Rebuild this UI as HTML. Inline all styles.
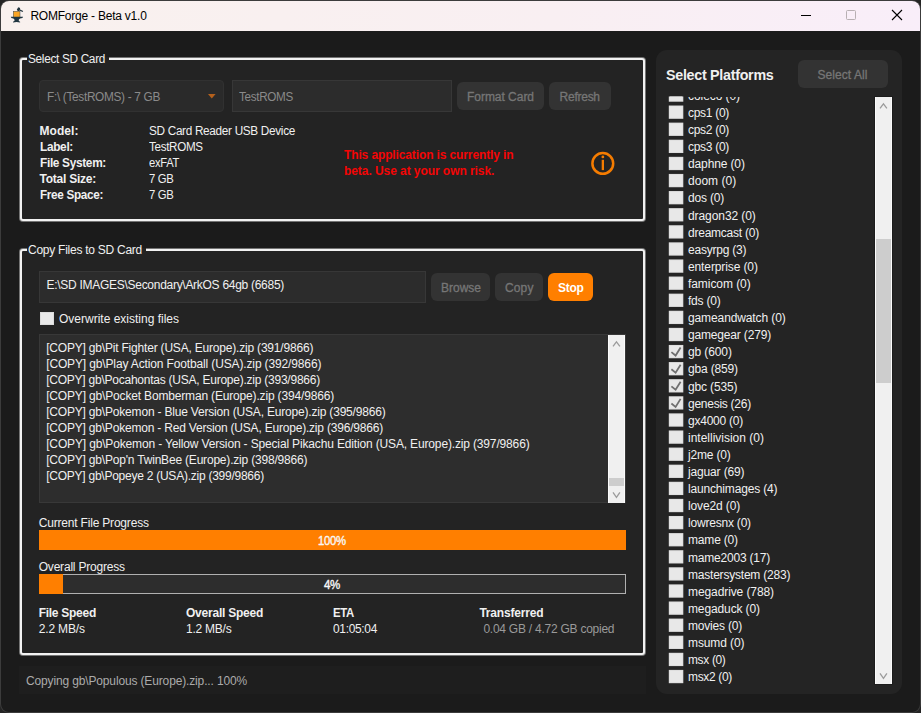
<!DOCTYPE html><html><head><meta charset="utf-8"><title>ROMForge - Beta v1.0</title><style>
html,body{margin:0;padding:0;background:#242424;}
body{width:921px;height:713px;overflow:hidden;position:relative;font-family:"Liberation Sans", sans-serif;font-size:12px;color:#fff;}
#win{position:absolute;left:1px;top:1px;width:919px;height:711px;border-radius:8px;background:#1b1b1b;overflow:hidden;box-shadow:0 0 0 1px #3c3c3c;}
#tb{position:absolute;left:0;top:0;width:919px;height:30px;background:linear-gradient(90deg,#f9f1ee 0%,#f9eff2 60%,#f9eef9 100%);}
.tx{position:absolute;transform-origin:0 50%;white-space:pre;line-height:16px;height:16px;margin-top:-8px;color:#f0f0f0;}
.title{color:#000;}
.b{font-weight:bold;}
.dis{color:#8a8a8a;}
.btn{color:#767676;-webkit-text-stroke:0.3px #767676;}
.stop{color:#fff;font-weight:bold;}
.red{color:#f40505;font-weight:bold;}
.gray{color:#9a9a9a;}
.status{color:#ababab;}
.hd{font-weight:bold;font-size:14.3px;}
.lg{color:#f0f0f0;}
.box{position:absolute;box-sizing:border-box;}
.grp{border:2px solid #f2f2f2;border-radius:3px;background:#232323;box-shadow:0 0 0 1px rgba(240,240,240,0.42);}
.legbg{background:#232323;}
.button{background:#333;border-radius:6px;}
.field{background:#2c2c2c;border:1px solid #373737;}
.cb{position:absolute;box-sizing:border-box;width:14px;height:13px;background:#e9e9e9;border:1px solid #dcdcdc;}
.sb{background:#f0f0f0;border:1px solid #fbfbfb;border-top:none;border-bottom:none}
.thumb{background:#cdcdcd;}
</style></head><body><div id="win"><div id="tb"></div></div>
<div class="box grp" style="left:20px;top:58px;width:625px;height:163px"></div>
<div class="box legbg" style="left:26.5px;top:50px;width:82.5px;height:16px;background:linear-gradient(#1b1b1b 0,#1b1b1b 7px,#232323 7px)"></div>
<div class="box" style="left:39px;top:80px;width:185px;height:32px;background:#2a2a2a;border:1px solid #313131;border-radius:4px"></div>
<svg class="box" style="left:207px;top:93px" width="10" height="7" viewBox="0 0 10 7"><path d="M1 1H8.6L4.8 5.6Z" fill="#b4601c"/></svg>
<div class="box field" style="left:232px;top:80px;width:219.5px;height:32px"></div>
<div class="box button" style="left:457px;top:82px;width:87px;height:28px"></div>
<div class="box button" style="left:549px;top:82px;width:61.5px;height:28px"></div>
<svg class="box" style="left:590px;top:151px" width="26" height="26" viewBox="0 0 26 26"><circle cx="12.8" cy="12.4" r="10.4" fill="none" stroke="#f57c00" stroke-width="2.5"/><rect x="11.7" y="8.8" width="2.3" height="10.3" fill="#f57c00"/><circle cx="12.85" cy="5.9" r="1.4" fill="#f57c00"/></svg>
<div class="box grp" style="left:20px;top:249px;width:625px;height:406px"></div>
<div class="box legbg" style="left:26.5px;top:241px;width:119.5px;height:16px;background:linear-gradient(#1b1b1b 0,#1b1b1b 7px,#232323 7px)"></div>
<div class="box field" style="left:39px;top:271px;width:387px;height:32px"></div>
<div class="box button" style="left:431px;top:273px;width:59px;height:28px"></div>
<div class="box button" style="left:495px;top:273px;width:48px;height:28px"></div>
<div class="box button" style="left:548px;top:273px;width:45px;height:28px;background:#ff7f00"></div>
<div class="cb" style="left:40px;top:312px;height:13px"></div>
<div class="box" style="left:39px;top:334px;width:586.5px;height:169px;background:#2d2d2d;border:1px solid #383838"></div>
<div class="box sb" style="left:608px;top:335px;width:17px;height:168px"></div>
<div class="box thumb" style="left:609px;top:478px;width:15px;height:7.7px"></div>
<svg class="box" style="left:608px;top:335px" width="17" height="17" viewBox="0 0 17 17"><path d="M5 11.4L8.45 6.9L11.9 11.4" fill="none" stroke="#9c9c9c" stroke-width="1.3"/></svg>
<svg class="box" style="left:608px;top:486px" width="17" height="17" viewBox="0 0 17 17"><path d="M5 6.4L8.45 11.4L11.9 6.4" fill="none" stroke="#9c9c9c" stroke-width="1.3"/></svg>
<div class="box" style="left:39px;top:530px;width:587px;height:19.5px;background:#ff7f00"></div>
<div class="box" style="left:39px;top:574px;width:587px;height:20px;background:#2d2d2d;border:1px solid #b0b0b0"></div>
<div class="box" style="left:39px;top:574px;width:24px;height:20px;background:#ff7f00"></div>
<div class="box" style="left:19px;top:666px;width:627px;height:27.5px;background:#1e1e1e"></div>
<div class="box" style="left:656px;top:49.5px;width:246px;height:644.5px;background:#242424;border-radius:11px"></div>
<div class="box button" style="left:798px;top:60px;width:90px;height:28px;border-radius:6px"></div>
<div class="box sb" style="left:875px;top:96.5px;width:17px;height:587.5px;box-shadow:0 0 0 1px #1c1c1c"></div>
<div class="box thumb" style="left:876px;top:239px;width:15px;height:144px"></div>
<svg class="box" style="left:875px;top:96.5px" width="17" height="17" viewBox="0 0 17 17"><path d="M5 11.4L8.45 6.9L11.9 11.4" fill="none" stroke="#9c9c9c" stroke-width="1.3"/></svg>
<svg class="box" style="left:875px;top:667px" width="17" height="17" viewBox="0 0 17 17"><path d="M5 6.4L8.45 11.4L11.9 6.4" fill="none" stroke="#9c9c9c" stroke-width="1.3"/></svg>
<svg class="box" style="left:795px;top:0" width="125" height="31" viewBox="0 0 125 31"><path d="M6 15.5H16" stroke="#000" stroke-width="1"/><rect x="51.5" y="10.5" width="9" height="9" rx="1" fill="none" stroke="#b8b0b3" stroke-width="1"/><path d="M97 10L107 20M107 10L97 20" stroke="#000" stroke-width="1.1"/></svg>
<svg class="box" style="left:4px;top:2px" width="30" height="28" viewBox="0 0 30 28"><rect x="9.3" y="9.3" width="6.7" height="6" fill="#f9a423" stroke="#3c4a50" stroke-width="0.5"/><path d="M6.8 14.7H19.1L18.4 15.9Q15.4 16.3 14.9 17.4L14.7 18.5Q15 19.3 16.1 19.7V20.6L12.6 19.9L9 20.6V19.7Q10.2 19.3 10.6 18.5L10.4 17.4Q9.9 16.3 7.4 15.9Z" fill="#1f3540"/><path d="M15 7.6L18.9 9.5" stroke="#22363f" stroke-width="1.2" fill="none"/><rect x="13.3" y="5.4" width="2.4" height="3.6" rx="0.8" transform="rotate(28 14.5 7.2)" fill="#22363f"/></svg>
<div class="box" style="left:660px;top:96px;width:215px;height:588px;overflow:hidden">
<svg class="box" style="left:0;top:0" width="215" height="588" viewBox="0 0 215 588"><defs><clipPath id="lc"><rect x="0" y="0.55" width="215" height="587.5"/></clipPath></defs><g clip-path="url(#lc)"><rect x="8.8" y="-7.58" width="14.5" height="13.3" fill="#dedede"/><rect x="9.8" y="-6.58" width="12.5" height="11.3" fill="#e8e8e8"/><rect x="8.8" y="9.52" width="14.5" height="13.3" fill="#dedede"/><rect x="9.8" y="10.52" width="12.5" height="11.3" fill="#e8e8e8"/><rect x="8.8" y="26.62" width="14.5" height="13.3" fill="#dedede"/><rect x="9.8" y="27.62" width="12.5" height="11.3" fill="#e8e8e8"/><rect x="8.8" y="43.72" width="14.5" height="13.3" fill="#dedede"/><rect x="9.8" y="44.72" width="12.5" height="11.3" fill="#e8e8e8"/><rect x="8.8" y="60.83" width="14.5" height="13.3" fill="#dedede"/><rect x="9.8" y="61.83" width="12.5" height="11.3" fill="#e8e8e8"/><rect x="8.8" y="77.93" width="14.5" height="13.3" fill="#dedede"/><rect x="9.8" y="78.93" width="12.5" height="11.3" fill="#e8e8e8"/><rect x="8.8" y="95.03" width="14.5" height="13.3" fill="#dedede"/><rect x="9.8" y="96.03" width="12.5" height="11.3" fill="#e8e8e8"/><rect x="8.8" y="112.13" width="14.5" height="13.3" fill="#dedede"/><rect x="9.8" y="113.13" width="12.5" height="11.3" fill="#e8e8e8"/><rect x="8.8" y="129.24" width="14.5" height="13.3" fill="#dedede"/><rect x="9.8" y="130.24" width="12.5" height="11.3" fill="#e8e8e8"/><rect x="8.8" y="146.34" width="14.5" height="13.3" fill="#dedede"/><rect x="9.8" y="147.34" width="12.5" height="11.3" fill="#e8e8e8"/><rect x="8.8" y="163.44" width="14.5" height="13.3" fill="#dedede"/><rect x="9.8" y="164.44" width="12.5" height="11.3" fill="#e8e8e8"/><rect x="8.8" y="180.54" width="14.5" height="13.3" fill="#dedede"/><rect x="9.8" y="181.54" width="12.5" height="11.3" fill="#e8e8e8"/><rect x="8.8" y="197.65" width="14.5" height="13.3" fill="#dedede"/><rect x="9.8" y="198.65" width="12.5" height="11.3" fill="#e8e8e8"/><rect x="8.8" y="214.75" width="14.5" height="13.3" fill="#dedede"/><rect x="9.8" y="215.75" width="12.5" height="11.3" fill="#e8e8e8"/><rect x="8.8" y="231.85" width="14.5" height="13.3" fill="#dedede"/><rect x="9.8" y="232.85" width="12.5" height="11.3" fill="#e8e8e8"/><rect x="8.8" y="248.95" width="14.5" height="13.3" fill="#dedede"/><rect x="9.8" y="249.95" width="12.5" height="11.3" fill="#e8e8e8"/><path d="M11.40 256.15l4.2 3.4l5 -8" fill="none" stroke="#707070" stroke-width="1.8"/><rect x="8.8" y="266.05" width="14.5" height="13.3" fill="#dedede"/><rect x="9.8" y="267.05" width="12.5" height="11.3" fill="#e8e8e8"/><path d="M11.40 273.25l4.2 3.4l5 -8" fill="none" stroke="#707070" stroke-width="1.8"/><rect x="8.8" y="283.16" width="14.5" height="13.3" fill="#dedede"/><rect x="9.8" y="284.16" width="12.5" height="11.3" fill="#e8e8e8"/><path d="M11.40 290.36l4.2 3.4l5 -8" fill="none" stroke="#707070" stroke-width="1.8"/><rect x="8.8" y="300.26" width="14.5" height="13.3" fill="#dedede"/><rect x="9.8" y="301.26" width="12.5" height="11.3" fill="#e8e8e8"/><path d="M11.40 307.46l4.2 3.4l5 -8" fill="none" stroke="#707070" stroke-width="1.8"/><rect x="8.8" y="317.36" width="14.5" height="13.3" fill="#dedede"/><rect x="9.8" y="318.36" width="12.5" height="11.3" fill="#e8e8e8"/><rect x="8.8" y="334.46" width="14.5" height="13.3" fill="#dedede"/><rect x="9.8" y="335.46" width="12.5" height="11.3" fill="#e8e8e8"/><rect x="8.8" y="351.57" width="14.5" height="13.3" fill="#dedede"/><rect x="9.8" y="352.57" width="12.5" height="11.3" fill="#e8e8e8"/><rect x="8.8" y="368.67" width="14.5" height="13.3" fill="#dedede"/><rect x="9.8" y="369.67" width="12.5" height="11.3" fill="#e8e8e8"/><rect x="8.8" y="385.77" width="14.5" height="13.3" fill="#dedede"/><rect x="9.8" y="386.77" width="12.5" height="11.3" fill="#e8e8e8"/><rect x="8.8" y="402.87" width="14.5" height="13.3" fill="#dedede"/><rect x="9.8" y="403.87" width="12.5" height="11.3" fill="#e8e8e8"/><rect x="8.8" y="419.98" width="14.5" height="13.3" fill="#dedede"/><rect x="9.8" y="420.98" width="12.5" height="11.3" fill="#e8e8e8"/><rect x="8.8" y="437.08" width="14.5" height="13.3" fill="#dedede"/><rect x="9.8" y="438.08" width="12.5" height="11.3" fill="#e8e8e8"/><rect x="8.8" y="454.18" width="14.5" height="13.3" fill="#dedede"/><rect x="9.8" y="455.18" width="12.5" height="11.3" fill="#e8e8e8"/><rect x="8.8" y="471.28" width="14.5" height="13.3" fill="#dedede"/><rect x="9.8" y="472.28" width="12.5" height="11.3" fill="#e8e8e8"/><rect x="8.8" y="488.38" width="14.5" height="13.3" fill="#dedede"/><rect x="9.8" y="489.38" width="12.5" height="11.3" fill="#e8e8e8"/><rect x="8.8" y="505.49" width="14.5" height="13.3" fill="#dedede"/><rect x="9.8" y="506.49" width="12.5" height="11.3" fill="#e8e8e8"/><rect x="8.8" y="522.59" width="14.5" height="13.3" fill="#dedede"/><rect x="9.8" y="523.59" width="12.5" height="11.3" fill="#e8e8e8"/><rect x="8.8" y="539.69" width="14.5" height="13.3" fill="#dedede"/><rect x="9.8" y="540.69" width="12.5" height="11.3" fill="#e8e8e8"/><rect x="8.8" y="556.79" width="14.5" height="13.3" fill="#dedede"/><rect x="9.8" y="557.79" width="12.5" height="11.3" fill="#e8e8e8"/><rect x="8.8" y="573.90" width="14.5" height="13.3" fill="#dedede"/><rect x="9.8" y="574.90" width="12.5" height="11.3" fill="#e8e8e8"/></g></svg>
<div class="box" style="left:0;top:0.5px;width:215px;height:587.5px;overflow:hidden"><div class="box" style="left:0;top:-0.5px">
<div class="tx" id="p0" style="left:28px;top:-0.18px;letter-spacing:-0.069px;">coleco (0)</div>
<div class="tx" id="p1" style="left:28px;top:16.92px;letter-spacing:-0.295px;">cps1 (0)</div>
<div class="tx" id="p2" style="left:28px;top:34.02px;letter-spacing:-0.295px;">cps2 (0)</div>
<div class="tx" id="p3" style="left:28px;top:51.12px;letter-spacing:-0.295px;">cps3 (0)</div>
<div class="tx" id="p4" style="left:28px;top:68.23px;letter-spacing:-0.125px;">daphne (0)</div>
<div class="tx" id="p5" style="left:28px;top:85.33px;letter-spacing:0.034px;">doom (0)</div>
<div class="tx" id="p6" style="left:28px;top:102.43px;letter-spacing:-0.166px;">dos (0)</div>
<div class="tx" id="p7" style="left:28px;top:119.53px;letter-spacing:-0.077px;">dragon32 (0)</div>
<div class="tx" id="p8" style="left:28px;top:136.64px;letter-spacing:-0.233px;">dreamcast (0)</div>
<div class="tx" id="p9" style="left:28px;top:153.74px;letter-spacing:-0.218px;">easyrpg (3)</div>
<div class="tx" id="p10" style="left:28px;top:170.84px;letter-spacing:-0.113px;">enterprise (0)</div>
<div class="tx" id="p11" style="left:28px;top:187.94px;letter-spacing:-0.068px;">famicom (0)</div>
<div class="tx" id="p12" style="left:28px;top:205.05px;letter-spacing:-0.217px;">fds (0)</div>
<div class="tx" id="p13" style="left:28px;top:222.15px;letter-spacing:-0.112px;">gameandwatch (0)</div>
<div class="tx" id="p14" style="left:28px;top:239.25px;letter-spacing:-0.171px;">gamegear (279)</div>
<div class="tx" id="p15" style="left:28px;top:256.35px;letter-spacing:-0.113px;">gb (600)</div>
<div class="tx" id="p16" style="left:28px;top:273.45px;letter-spacing:-0.175px;">gba (859)</div>
<div class="tx" id="p17" style="left:28px;top:290.56px;letter-spacing:-0.145px;">gbc (535)</div>
<div class="tx" id="p18" style="left:28px;top:307.66px;letter-spacing:-0.262px;">genesis (26)</div>
<div class="tx" id="p19" style="left:28px;top:324.76px;letter-spacing:-0.237px;">gx4000 (0)</div>
<div class="tx" id="p20" style="left:28px;top:341.86px;letter-spacing:-0.008px;">intellivision (0)</div>
<div class="tx" id="p21" style="left:28px;top:358.97px;letter-spacing:-0.164px;">j2me (0)</div>
<div class="tx" id="p22" style="left:28px;top:376.07px;letter-spacing:-0.148px;">jaguar (69)</div>
<div class="tx" id="p23" style="left:28px;top:393.17px;letter-spacing:-0.165px;">launchimages (4)</div>
<div class="tx" id="p24" style="left:28px;top:410.27px;letter-spacing:-0.127px;">love2d (0)</div>
<div class="tx" id="p25" style="left:28px;top:427.38px;letter-spacing:-0.205px;">lowresnx (0)</div>
<div class="tx" id="p26" style="left:28px;top:444.48px;letter-spacing:-0.180px;">mame (0)</div>
<div class="tx" id="p27" style="left:28px;top:461.58px;letter-spacing:-0.209px;">mame2003 (17)</div>
<div class="tx" id="p28" style="left:28px;top:478.68px;letter-spacing:-0.213px;">mastersystem (283)</div>
<div class="tx" id="p29" style="left:28px;top:495.78px;letter-spacing:-0.092px;">megadrive (788)</div>
<div class="tx" id="p30" style="left:28px;top:512.89px;letter-spacing:-0.123px;">megaduck (0)</div>
<div class="tx" id="p31" style="left:28px;top:529.99px;letter-spacing:-0.192px;">movies (0)</div>
<div class="tx" id="p32" style="left:28px;top:547.09px;letter-spacing:-0.105px;">msumd (0)</div>
<div class="tx" id="p33" style="left:28px;top:564.19px;letter-spacing:-0.320px;transform:scaleX(0.9931);">msx (0)</div>
<div class="tx" id="p34" style="left:28px;top:581.30px;letter-spacing:-0.320px;transform:scaleX(0.9975);">msx2 (0)</div>
</div></div></div>
<div class="tx title" id="t0" style="left:30.40px;top:15.60px;letter-spacing:-0.226px;">ROMForge - Beta v1.0</div>
<div class="tx lg" id="t1" style="left:28.00px;top:58.50px;letter-spacing:-0.320px;transform:scaleX(0.9844);">Select SD Card</div>
<div class="tx lg" id="t2" style="left:28.00px;top:249.50px;letter-spacing:-0.256px;">Copy Files to SD Card</div>
<div class="tx dis" id="t3" style="left:46.50px;top:96.50px;letter-spacing:-0.320px;transform:scaleX(0.9858);">F:\ (TestROMS) - 7 GB</div>
<div class="tx dis" id="t4" style="left:239.00px;top:96.50px;letter-spacing:-0.320px;transform:scaleX(0.9738);">TestROMS</div>
<div class="tx btn" id="t5" style="left:467.00px;top:96.50px;letter-spacing:-0.033px;">Format Card</div>
<div class="tx btn" id="t6" style="left:559.60px;top:96.50px;letter-spacing:-0.262px;">Refresh</div>
<div class="tx b" id="t7" style="left:39.50px;top:130.50px;letter-spacing:0.055px;">Model:</div>
<div class="tx " id="t8" style="left:149.00px;top:130.50px;letter-spacing:-0.320px;transform:scaleX(0.9816);">SD Card Reader USB Device</div>
<div class="tx b" id="t9" style="left:39.50px;top:146.50px;letter-spacing:-0.320px;transform:scaleX(0.9873);">Label:</div>
<div class="tx " id="t10" style="left:149.00px;top:146.50px;letter-spacing:-0.320px;transform:scaleX(0.9692);">TestROMS</div>
<div class="tx b" id="t11" style="left:39.50px;top:162.50px;letter-spacing:-0.320px;transform:scaleX(0.9871);">File System:</div>
<div class="tx " id="t12" style="left:149.00px;top:162.50px;letter-spacing:-0.320px;transform:scaleX(0.9318);">exFAT</div>
<div class="tx b" id="t13" style="left:39.50px;top:178.50px;letter-spacing:-0.239px;">Total Size:</div>
<div class="tx " id="t14" style="left:149.00px;top:178.50px;letter-spacing:-0.320px;transform:scaleX(0.9394);">7 GB</div>
<div class="tx b" id="t15" style="left:39.50px;top:194.50px;letter-spacing:-0.320px;transform:scaleX(0.9763);">Free Space:</div>
<div class="tx " id="t16" style="left:149.00px;top:194.50px;letter-spacing:-0.320px;transform:scaleX(0.9394);">7 GB</div>
<div class="tx red" id="t17" style="left:344.00px;top:155.00px;letter-spacing:-0.124px;">This application is currently in</div>
<div class="tx red" id="t18" style="left:344.00px;top:171.00px;letter-spacing:-0.065px;">beta. Use at your own risk.</div>
<div class="tx " id="t19" style="left:46.50px;top:285.00px;letter-spacing:-0.282px;">E:\SD IMAGES\Secondary\ArkOS 64gb (6685)</div>
<div class="tx btn" id="t20" style="left:441.00px;top:288.00px;letter-spacing:-0.003px;">Browse</div>
<div class="tx btn" id="t21" style="left:505.00px;top:288.00px;letter-spacing:0.121px;">Copy</div>
<div class="tx stop" id="t22" style="left:558.00px;top:288.00px;letter-spacing:-0.293px;">Stop</div>
<div class="tx " id="t23" style="left:59.00px;top:318.80px;letter-spacing:-0.002px;">Overwrite existing files</div>
<div class="tx " id="t24" style="left:46.20px;top:347.70px;letter-spacing:-0.196px;">[COPY] gb\Pit Fighter (USA, Europe).zip (391/9866)</div>
<div class="tx " id="t25" style="left:46.20px;top:363.70px;letter-spacing:-0.138px;">[COPY] gb\Play Action Football (USA).zip (392/9866)</div>
<div class="tx " id="t26" style="left:46.20px;top:379.70px;letter-spacing:-0.239px;">[COPY] gb\Pocahontas (USA, Europe).zip (393/9866)</div>
<div class="tx " id="t27" style="left:46.20px;top:395.70px;letter-spacing:-0.167px;">[COPY] gb\Pocket Bomberman (Europe).zip (394/9866)</div>
<div class="tx " id="t28" style="left:46.20px;top:411.70px;letter-spacing:-0.189px;">[COPY] gb\Pokemon - Blue Version (USA, Europe).zip (395/9866)</div>
<div class="tx " id="t29" style="left:46.20px;top:427.70px;letter-spacing:-0.201px;">[COPY] gb\Pokemon - Red Version (USA, Europe).zip (396/9866)</div>
<div class="tx " id="t30" style="left:46.20px;top:443.70px;letter-spacing:-0.153px;">[COPY] gb\Pokemon - Yellow Version - Special Pikachu Edition (USA, Europe).zip (397/9866)</div>
<div class="tx " id="t31" style="left:46.20px;top:459.70px;letter-spacing:-0.194px;">[COPY] gb\Pop'n TwinBee (Europe).zip (398/9866)</div>
<div class="tx " id="t32" style="left:46.20px;top:475.70px;letter-spacing:-0.248px;">[COPY] gb\Popeye 2 (USA).zip (399/9866)</div>
<div class="tx " id="t33" style="left:38.70px;top:523.30px;letter-spacing:-0.188px;">Current File Progress</div>
<div class="tx " id="t34" style="left:318.40px;top:540.70px;letter-spacing:-0.320px;transform:scaleX(0.9448);-webkit-text-stroke:0.35px #fff;">100%</div>
<div class="tx " id="t35" style="left:38.70px;top:566.80px;letter-spacing:-0.198px;">Overall Progress</div>
<div class="tx " id="t36" style="left:324.30px;top:585.00px;letter-spacing:-0.320px;transform:scaleX(0.9579);-webkit-text-stroke:0.35px #fff;">4%</div>
<div class="tx b" id="t37" style="left:38.70px;top:612.70px;letter-spacing:-0.273px;">File Speed</div>
<div class="tx " id="t38" style="left:38.70px;top:628.50px;letter-spacing:-0.145px;">2.2 MB/s</div>
<div class="tx b" id="t39" style="left:186.00px;top:612.70px;letter-spacing:-0.227px;">Overall Speed</div>
<div class="tx " id="t40" style="left:186.00px;top:628.50px;letter-spacing:-0.232px;">1.2 MB/s</div>
<div class="tx b" id="t41" style="left:333.00px;top:612.70px;letter-spacing:-0.320px;transform:scaleX(0.9481);">ETA</div>
<div class="tx " id="t42" style="left:333.00px;top:628.50px;letter-spacing:-0.320px;transform:scaleX(0.9964);">01:05:04</div>
<div class="tx b" id="t43" style="left:479.40px;top:612.70px;letter-spacing:-0.185px;">Transferred</div>
<div class="tx gray" id="t44" style="left:483.40px;top:628.50px;letter-spacing:-0.244px;">0.04 GB / 4.72 GB copied</div>
<div class="tx status" id="t45" style="left:26.00px;top:681.30px;letter-spacing:-0.145px;">Copying gb\Populous (Europe).zip... 100%</div>
<div class="tx hd" id="t46" style="left:666.00px;top:74.90px;letter-spacing:-0.284px;">Select Platforms</div>
<div class="tx btn" id="t47" style="left:817.50px;top:74.50px;letter-spacing:0.064px;">Select All</div>
</body></html>
